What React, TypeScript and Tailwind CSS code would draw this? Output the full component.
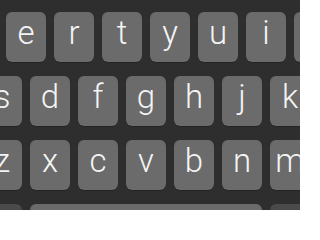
import React from "react";

const Key = ({ ch, dark = false, w = "w-[40px]" }: { ch?: string; dark?: boolean; w?: string }) => (
  <div
    className={`${w} h-[50px] shrink-0 rounded-[6px] ${dark ? "bg-[#4a4a4a]" : "bg-[#6b6b6b]"} shadow-[0_1px_0_#232323] flex justify-center text-[#f4f4f4] text-[33px] leading-[50px] font-light`}
    style={{ fontFamily: "Roboto, 'Noto Sans', sans-serif" }}
  >
    {ch ? <span className="-mt-[4px]">{ch}</span> : null}
  </div>
);

export default function App() {
  const r1 = ["", "e", "r", "t", "y", "u", "i", ""];
  const r2 = ["s", "d", "f", "g", "h", "j", "k", ""];
  const r3 = ["z", "x", "c", "v", "b", "n", "m", ""];
  return (
    <div className="w-[300px] h-[210px] bg-[#2e2e2e] overflow-hidden flex flex-col gap-[14px] pt-[12px]">
      <div className="flex gap-[8px] -ml-[42px]">
        {r1.map((c, i) => (
          <Key key={i} ch={c} />
        ))}
      </div>
      <div className="flex gap-[8px] -ml-[18px]">
        {r2.map((c, i) => (
          <Key key={i} ch={c} />
        ))}
      </div>
      <div className="flex gap-[8px] -ml-[18px]">
        {r3.map((c, i) => (
          <Key key={i} ch={c} />
        ))}
      </div>
      <div className="flex gap-[8px] -ml-[18px]">
        <Key dark />
        <Key w="w-[232px]" />
        <Key dark />
      </div>
    </div>
  );
}
